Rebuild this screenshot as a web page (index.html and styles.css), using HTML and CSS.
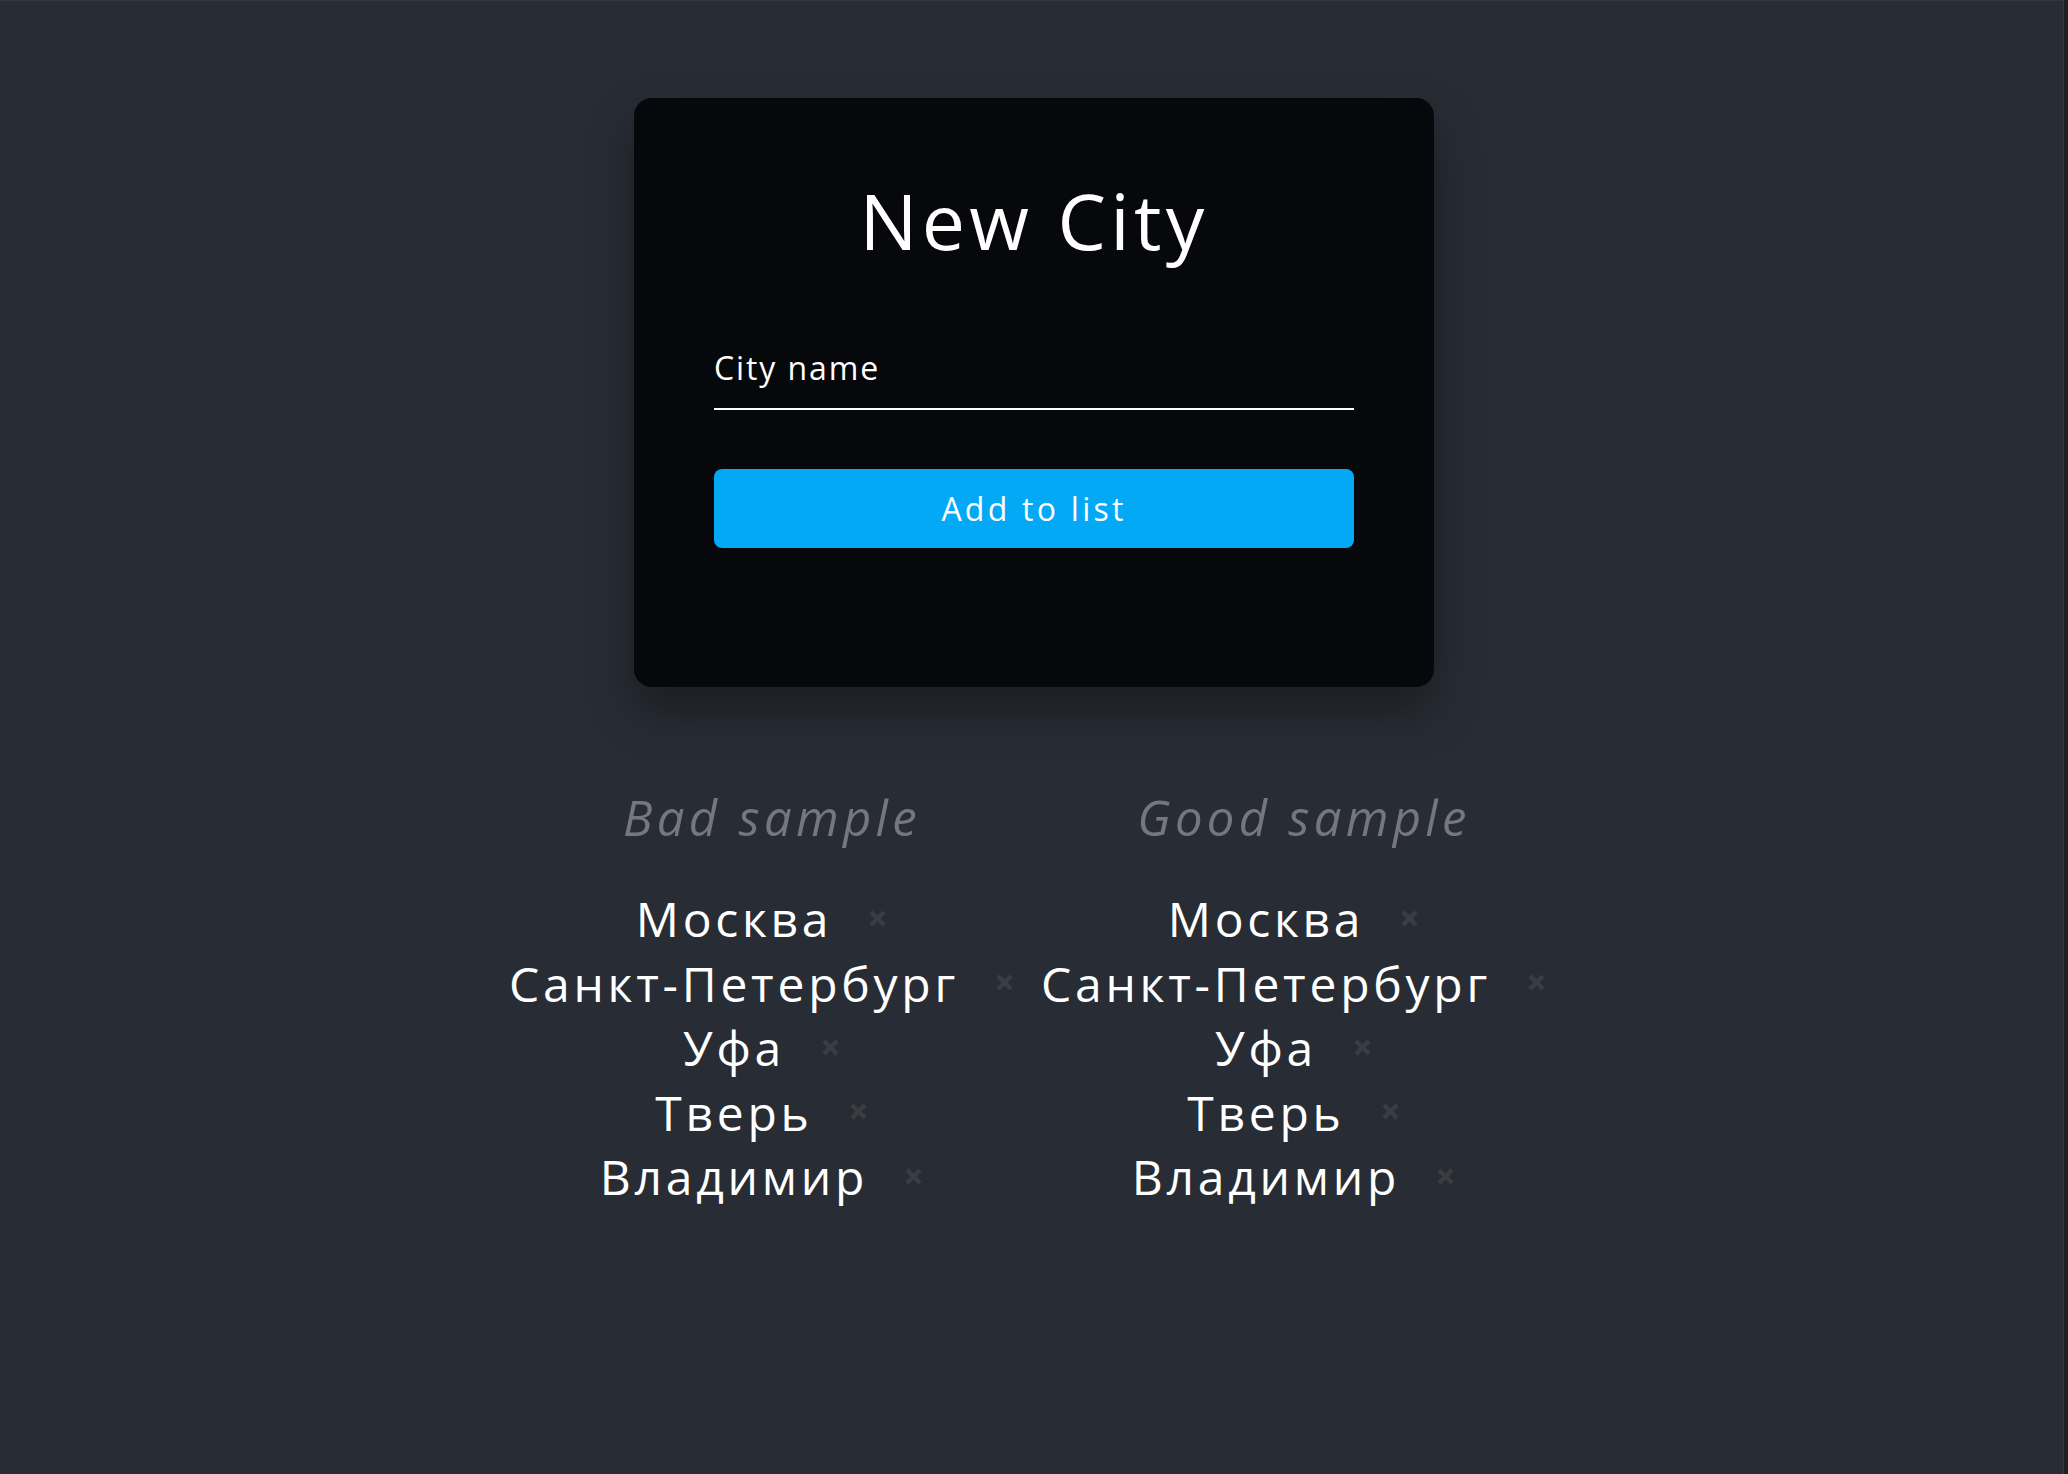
FILE: index.html
```html
<!DOCTYPE html>
<html lang="ru">
<head>
<meta charset="utf-8">
<title>New City</title>
<link rel="stylesheet" href="styles.css">
</head>
<body>
<main class="page">
  <section class="card">
    <h1 class="card-title">New City</h1>
    <div class="field"><span class="field-label">City name</span></div>
    <button class="add-btn" type="button"><span>Add to list</span></button>
  </section>
  <section class="samples">
    <div class="sample">
      <h2 class="sample-title">Bad sample</h2>
      <ul class="city-list">
        <li class="city"><span class="city-name">Москва</span><span class="remove"><svg viewBox="0 0 17 17" width="17" height="17"><path d="M2 2L15 15M15 2L2 15"/></svg></span></li>
        <li class="city"><span class="city-name">Санкт-Петербург</span><span class="remove"><svg viewBox="0 0 17 17" width="17" height="17"><path d="M2 2L15 15M15 2L2 15"/></svg></span></li>
        <li class="city"><span class="city-name">Уфа</span><span class="remove"><svg viewBox="0 0 17 17" width="17" height="17"><path d="M2 2L15 15M15 2L2 15"/></svg></span></li>
        <li class="city"><span class="city-name">Тверь</span><span class="remove"><svg viewBox="0 0 17 17" width="17" height="17"><path d="M2 2L15 15M15 2L2 15"/></svg></span></li>
        <li class="city"><span class="city-name">Владимир</span><span class="remove"><svg viewBox="0 0 17 17" width="17" height="17"><path d="M2 2L15 15M15 2L2 15"/></svg></span></li>
      </ul>
    </div>
    <div class="sample">
      <h2 class="sample-title">Good sample</h2>
      <ul class="city-list">
        <li class="city"><span class="city-name">Москва</span><span class="remove"><svg viewBox="0 0 17 17" width="17" height="17"><path d="M2 2L15 15M15 2L2 15"/></svg></span></li>
        <li class="city"><span class="city-name">Санкт-Петербург</span><span class="remove"><svg viewBox="0 0 17 17" width="17" height="17"><path d="M2 2L15 15M15 2L2 15"/></svg></span></li>
        <li class="city"><span class="city-name">Уфа</span><span class="remove"><svg viewBox="0 0 17 17" width="17" height="17"><path d="M2 2L15 15M15 2L2 15"/></svg></span></li>
        <li class="city"><span class="city-name">Тверь</span><span class="remove"><svg viewBox="0 0 17 17" width="17" height="17"><path d="M2 2L15 15M15 2L2 15"/></svg></span></li>
        <li class="city"><span class="city-name">Владимир</span><span class="remove"><svg viewBox="0 0 17 17" width="17" height="17"><path d="M2 2L15 15M15 2L2 15"/></svg></span></li>
      </ul>
    </div>
  </section>
</main>
</body>
</html>
```

FILE: styles.css
```css
* { box-sizing: border-box; }
html { background: #282c34; }
body {
  margin: 0;
  min-height: 100vh;
  background: #282c34;
  color: #fff;
  font-family: "Open Sans", "Noto Sans", sans-serif;
  font-weight: 400;
  box-shadow: inset -4px 0 0 #1d2023, inset -5px 0 0 #363a40, inset 0 1px 0 #33373d;
}
.page {
  display: flex;
  flex-direction: column;
  align-items: center;
  padding-top: 98px;
}
.card {
  width: 800px;
  background: #07080b;
  border-radius: 18px;
  padding: 84px 80px 139px;
  box-shadow: 0 24px 48px rgba(0, 0, 0, 0.35);
  display: flex;
  flex-direction: column;
}
.card-title {
  margin: 0;
  font-size: 77px;
  line-height: 77px;
  font-weight: 400;
  letter-spacing: 4.3px;
  text-align: center;
}
.field {
  margin-top: 89px;
  padding-bottom: 20px;
  border-bottom: 2px solid #fff;
}
.field-label {
  display: block;
  font-size: 32px;
  line-height: 40px;
  letter-spacing: 1.9px;
}
.add-btn {
  margin-top: 59px;
  height: 79px;
  border: 0;
  border-radius: 8px;
  background: #03a9f4;
  color: #fff;
  font-family: inherit;
  font-weight: 400;
  font-size: 32px;
  line-height: 40px;
  letter-spacing: 3.25px;
  display: flex;
  align-items: center;
  justify-content: center;
}
.samples {
  margin-top: 100px;
  display: grid;
  grid-template-columns: 532px 532px;
  justify-content: center;
}
.sample { display: flex; flex-direction: column; align-items: center; }
.sample-title {
  margin: 0;
  padding-left: 8px;
  font-size: 49px;
  line-height: 60px;
  font-style: italic;
  font-weight: 400;
  letter-spacing: 4.3px;
  color: #76777c;
}
.city-list {
  list-style: none;
  margin: 40px 0 0;
  padding: 0;
  display: flex;
  flex-direction: column;
  align-items: center;
}
.city {
  display: flex;
  align-items: center;
  font-size: 48px;
  line-height: 64.5px;
  letter-spacing: 3.75px;
}
.remove {
  margin-left: 23px;
  padding: 0 14px;
  display: flex;
  margin-top: -2px;
}
.remove svg { stroke: #3a3d42; stroke-width: 4.5; fill: none; }
```
